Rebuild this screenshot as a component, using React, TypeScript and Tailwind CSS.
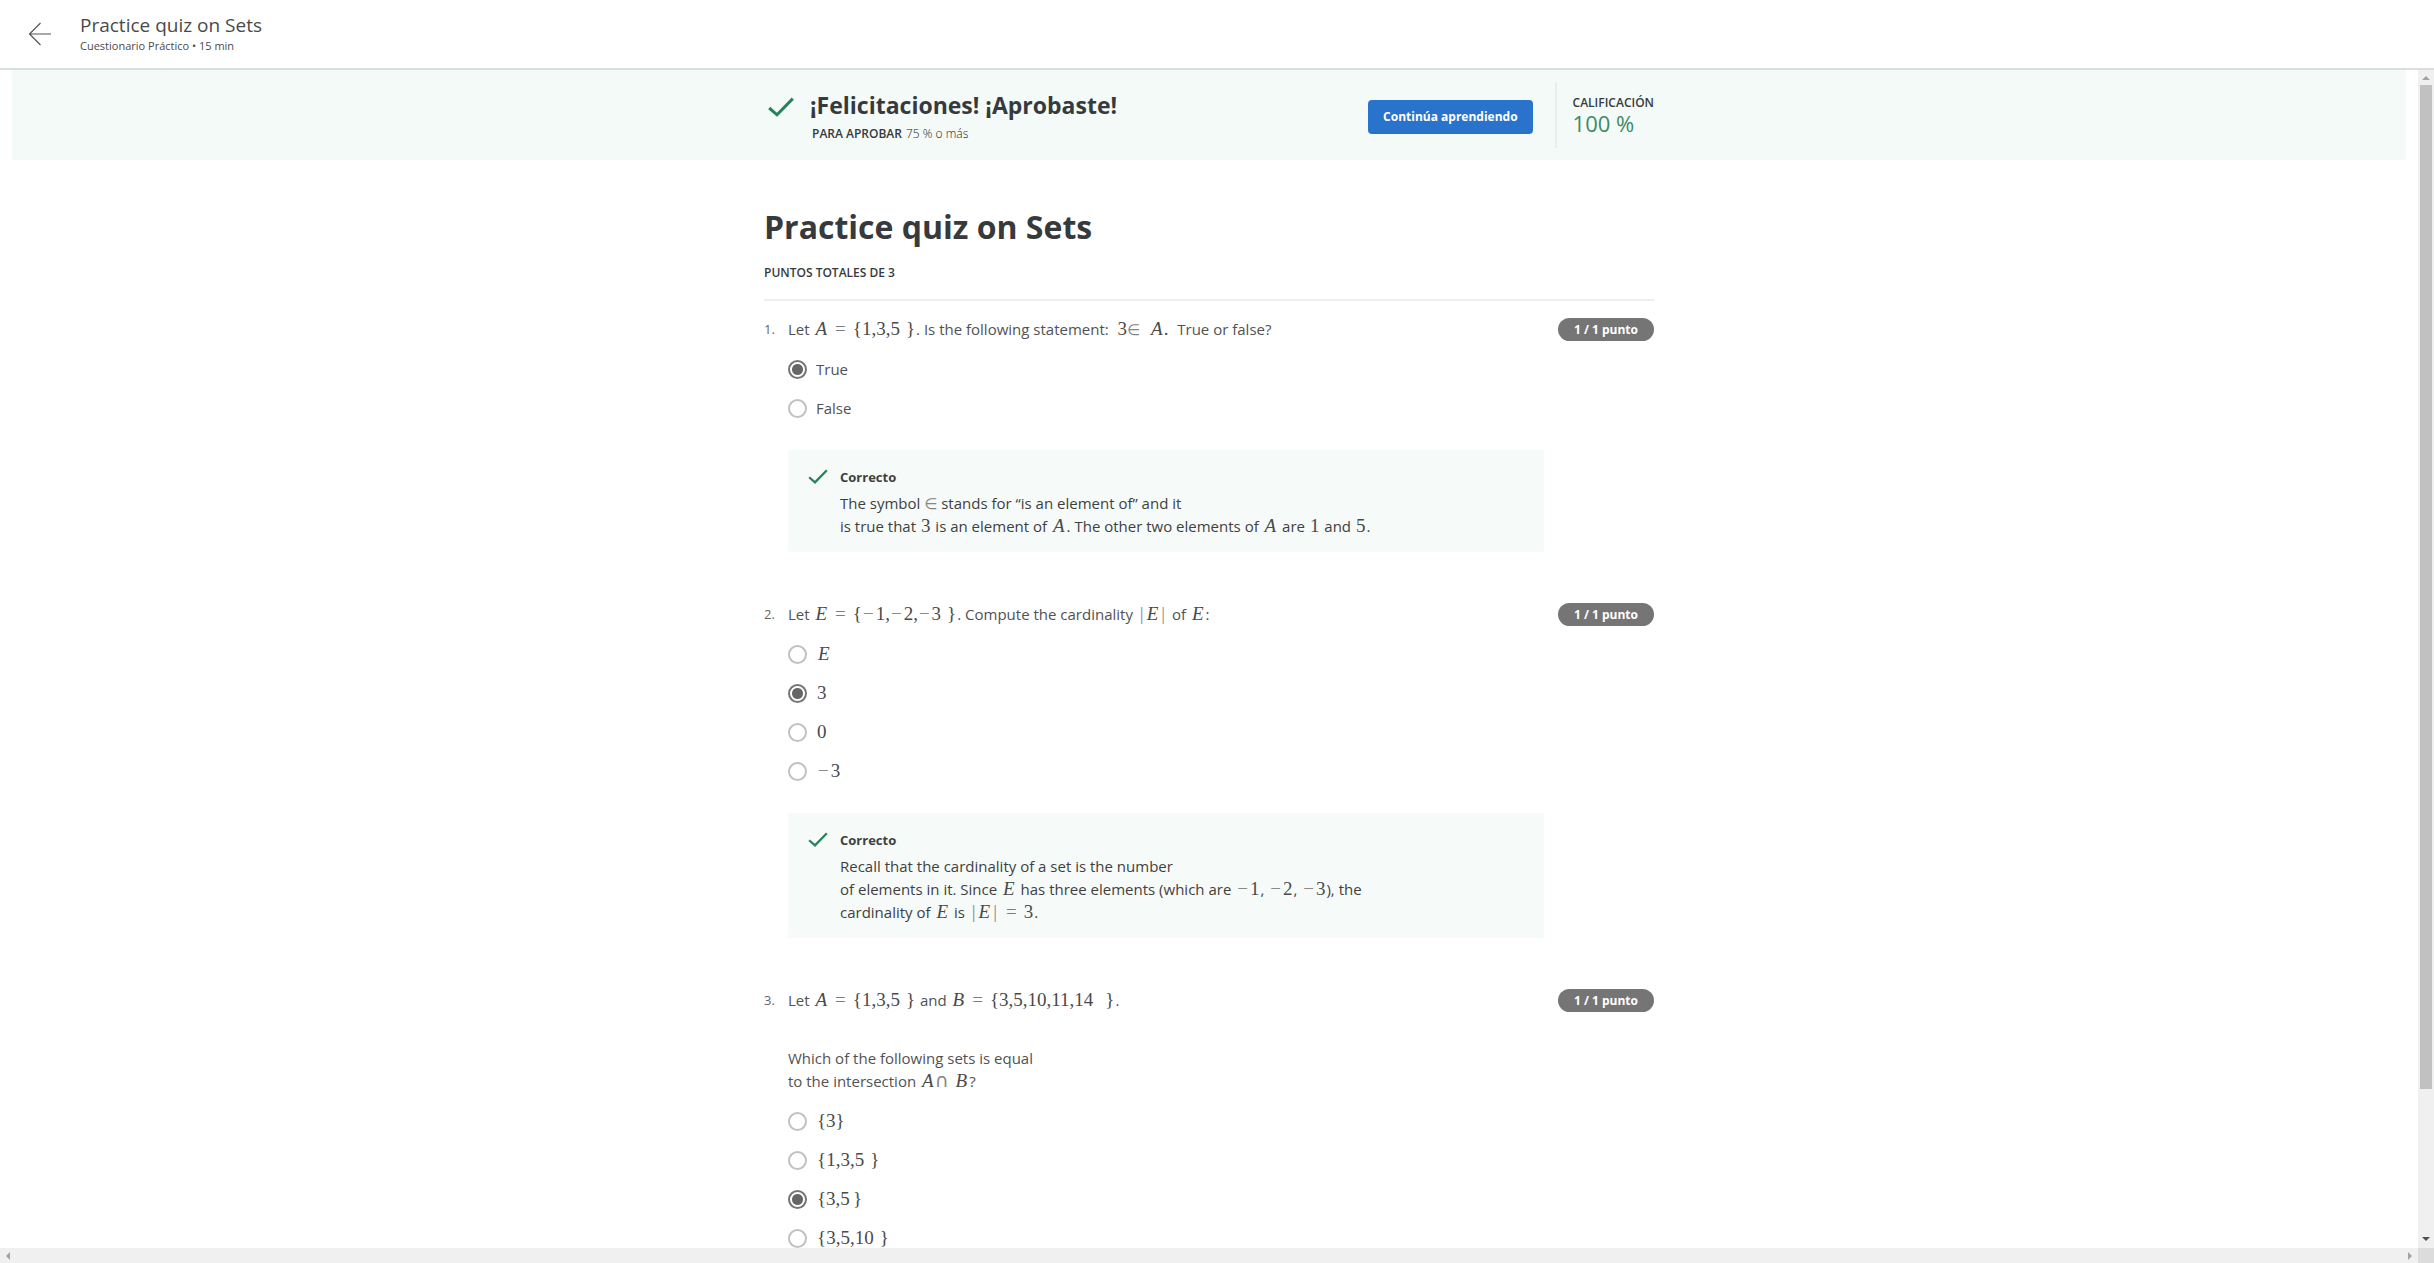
import React, { useState } from "react";

const check = (cls: string, stroke: number) => (
  <svg viewBox="0 0 26 20" className={cls} fill="none" stroke="#26845a" strokeWidth={stroke} aria-hidden="true">
    <path d="M1.2 11 L9 17.8 L24.8 1.6" />
  </svg>
);

function M({ children }: { children: React.ReactNode }) {
  return (
    <span className="mx-px font-['Liberation_Serif',serif] text-[19px] leading-[0] whitespace-nowrap text-[#4a4a4a]">
      {children}
    </span>
  );
}
const V = ({ children }: { children: string }) => <i className="mx-px">{children}</i>;
const Eq = () => <span className="mx-[7px] text-[#7d7d7d]">=</span>;
const Neg = () => <span className="mr-0.5 ml-px text-[#8a8a8a]">−</span>;
const Bar = () => <span className="mx-0.5 text-[#8a8a8a]">|</span>;
const Sym = ({ children }: { children: string }) => (
  <span className="font-['DejaVu_Sans',sans-serif] text-[15px] leading-[0] text-[#858585]">{children}</span>
);

type Option = { key: string; label: React.ReactNode };
type QuestionData = {
  n: number;
  prompt: React.ReactNode;
  options: Option[];
  answer: string;
  feedback?: React.ReactNode;
};

const setBody = (body: string) => (
  <>
    {"{"}
    {body}
    <span className="ml-1.5">{"}"}</span>
  </>
);

const questions: QuestionData[] = [
  {
    n: 1,
    prompt: (
      <p>
        Let <M><V>A</V><Eq />{setBody("1,3,5")}</M>. Is the following statement:&nbsp; <M>3<Sym>∈</Sym><span className="ml-2.5"><V>A</V></span>.</M>&nbsp; True or false?
      </p>
    ),
    options: [
      { key: "true", label: "True" },
      { key: "false", label: "False" },
    ],
    answer: "true",
    feedback: (
      <>
        The symbol <Sym>∈</Sym> stands for “is an element of” and it
        <br />
        is true that <M>3</M> is an element of <M><V>A</V></M>. The other two elements of <M><V>A</V></M> are <M>1</M> and <M>5</M>.
      </>
    ),
  },
  {
    n: 2,
    prompt: (
      <p>
        Let <M><V>E</V><Eq />{"{"}<Neg />1,<Neg />2,<Neg />3<span className="ml-1.5">{"}"}</span></M>. Compute the cardinality <M><Bar /><V>E</V><Bar /></M> of <M><V>E</V></M>:
      </p>
    ),
    options: [
      { key: "e", label: <M><V>E</V></M> },
      { key: "3", label: <M>3</M> },
      { key: "0", label: <M>0</M> },
      { key: "-3", label: <M><Neg />3</M> },
    ],
    answer: "3",
    feedback: (
      <>
        Recall that the cardinality of a set is the number
        <br />
        of elements in it. Since <M><V>E</V></M> has three elements (which are <M><Neg />1</M>, <M><Neg />2</M>, <M><Neg />3</M>), the
        <br />
        cardinality of <M><V>E</V></M> is <M><Bar /><V>E</V><Bar /><Eq />3</M>.
      </>
    ),
  },
  {
    n: 3,
    prompt: (
      <>
        <p>
          Let <M><V>A</V><Eq />{setBody("1,3,5")}</M> and <M><V>B</V><Eq />{"{"}3,5,10,11,14<span className="ml-3">{"}"}</span></M>.
        </p>
        <p className="mt-[35px]">
          Which of the following sets is equal
          <br />
          to the intersection{" "}
          <M>
            <V>A</V>
            <span className="font-['DejaVu_Sans',sans-serif] text-[#858585]">∩</span>
            <span className="ml-1.5"><V>B</V></span>
          </M>
          ?
        </p>
      </>
    ),
    options: [
      { key: "a", label: <M>{"{3}"}</M> },
      { key: "b", label: <M>{setBody("1,3,5")}</M> },
      { key: "c", label: <M>{"{3,5"}<span className="ml-[3px]">{"}"}</span></M> },
      { key: "d", label: <M>{setBody("3,5,10")}</M> },
    ],
    answer: "c",
  },
];

function Question({ q }: { q: QuestionData }) {
  const [value, setValue] = useState(q.answer);
  return (
    <li className="flex items-start text-[15px] leading-[23px] text-[#525252]">
      <span className="w-6 shrink-0 text-[13px] text-[#666]">{q.n}.</span>
      <div className="min-w-0 flex-1">
        <div className="whitespace-nowrap">{q.prompt}</div>
        <fieldset className="mt-[9px]" aria-label={`Pregunta ${q.n}`}>
          {q.options.map((o) => (
            <label key={o.key} className="flex h-[39px] items-center gap-[9px]">
              <input
                type="radio"
                name={`q${q.n}`}
                checked={value === o.key}
                onChange={() => setValue(o.key)}
                className="size-[19px] shrink-0 appearance-none rounded-full border-2 border-[#c1c1c1] bg-white checked:border-[#757575] checked:bg-[radial-gradient(circle,#666_5px,white_6px)]"
              />
              <span>{o.label}</span>
            </label>
          ))}
        </fieldset>
        {q.feedback && (
          <div className="mt-[22px] mr-3.5 flex bg-[#f6fbf9] pt-4 pb-3.5 pl-5 text-[#3f3f3f]">
            {check("mt-[3px] mr-3 h-[15px] w-5 shrink-0", 3)}
            <div className="whitespace-nowrap">
              <h3 className="mb-[3px] text-[13px] leading-[23px] font-bold">Correcto</h3>
              <p>{q.feedback}</p>
            </div>
          </div>
        )}
      </div>
      <span className="ml-auto w-24 shrink-0 rounded-full bg-[#757575] text-center text-xs leading-[23px] font-bold text-white">
        1 / 1 punto
      </span>
    </li>
  );
}

export default function App() {
  return (
    <div className="flex h-screen flex-col overflow-hidden bg-white font-['Open_Sans',sans-serif] text-[#373a3c]">
      <header className="flex h-[70px] shrink-0 items-center border-b-2 border-[#dadedd] pl-7">
        <button aria-label="Volver" className="mr-7 size-6">
          <svg viewBox="0 0 24 24" className="size-6" fill="none" stroke="#555" strokeWidth="1.2">
            <path d="M12.5 1 L1.5 12 L12.5 23 M1.5 12 H23" />
          </svg>
        </button>
        <div>
          <h1 className="text-[19px] leading-6 text-[#4a4a4a]">Practice quiz on Sets</h1>
          <p className="text-[11px] leading-[18px] text-[#4a4a4a]">Cuestionario Práctico • 15 min</p>
        </div>
      </header>

      <div className="flex min-h-0 flex-1">
        <main className="min-w-0 flex-1 overflow-hidden px-3">
          <section className="h-[90px] bg-[#f3faf8]">
            <div className="mx-auto flex h-full max-w-[890px] items-center pt-1">
              {check("mb-5 ml-1 h-5 w-[26px] shrink-0", 3)}
              <div className="mt-0.5 ml-4">
                <h2 className="text-[23px] leading-8 font-bold">¡Felicitaciones! ¡Aprobaste!</h2>
                <p className="ml-0.5 text-xs leading-[26px]">
                  <span className="mr-1 font-semibold">PARA APROBAR</span>
                  <span className="font-light text-[#222]">75 % o más</span>
                </p>
              </div>
              <button className="ml-auto h-[34px] rounded-sm bg-[#2a73cc] px-[15px] text-xs font-bold text-white">
                Continúa aprendiendo
              </button>
              <div className="mb-1 ml-[22px] flex h-[66px] flex-col justify-center border-l-2 border-[#e8eeec] pl-4">
                <p className="text-xs leading-4 font-semibold">CALIFICACIÓN</p>
                <p className="text-[22px] leading-[25px] text-[#3d8b63]">100 %</p>
              </div>
            </div>
          </section>

          <section className="mx-auto max-w-[890px]">
            <h2 className="mt-11 text-[32px] leading-[46px] font-bold">Practice quiz on Sets</h2>
            <p className="mt-3.5 border-b-2 border-[#eeeeee] pb-[17px] text-xs leading-[18px] font-semibold">
              PUNTOS TOTALES DE 3
            </p>
            <ol className="mt-[17px] flex flex-col gap-[51px]">
              {questions.map((q) => (
                <Question key={q.n} q={q} />
              ))}
            </ol>
          </section>
        </main>
        <div className="flex w-4 shrink-0 flex-col items-center bg-[#f0f0f0]" aria-hidden="true">
          <svg viewBox="0 0 16 15" className="h-[15px] w-4 shrink-0" fill="#a3a3a3">
            <path d="M4 10 L8 6 L12 10 Z" />
          </svg>
          <div className="min-h-0 w-3 flex-[1004] bg-[#c1c1c1]" />
          <div className="min-h-0 flex-[144]" />
          <svg viewBox="0 0 16 15" className="h-[15px] w-4 shrink-0" fill="#505050">
            <path d="M4 4 L12 4 L8 8 Z" />
          </svg>
        </div>
      </div>
      <div className="flex h-[15px] shrink-0 items-center justify-between bg-[#f0f0f0]" aria-hidden="true">
        <svg viewBox="0 0 16 15" className="h-[15px] w-4" fill="#a3a3a3">
          <path d="M10 4 L10 12 L6 8 Z" />
        </svg>
        <div className="flex">
          <svg viewBox="0 0 16 15" className="h-[15px] w-4" fill="#a3a3a3">
            <path d="M6 4 L6 12 L10 8 Z" />
          </svg>
          <div className="h-[15px] w-4 bg-[#dcdcdc]" />
        </div>
      </div>
    </div>
  );
}
